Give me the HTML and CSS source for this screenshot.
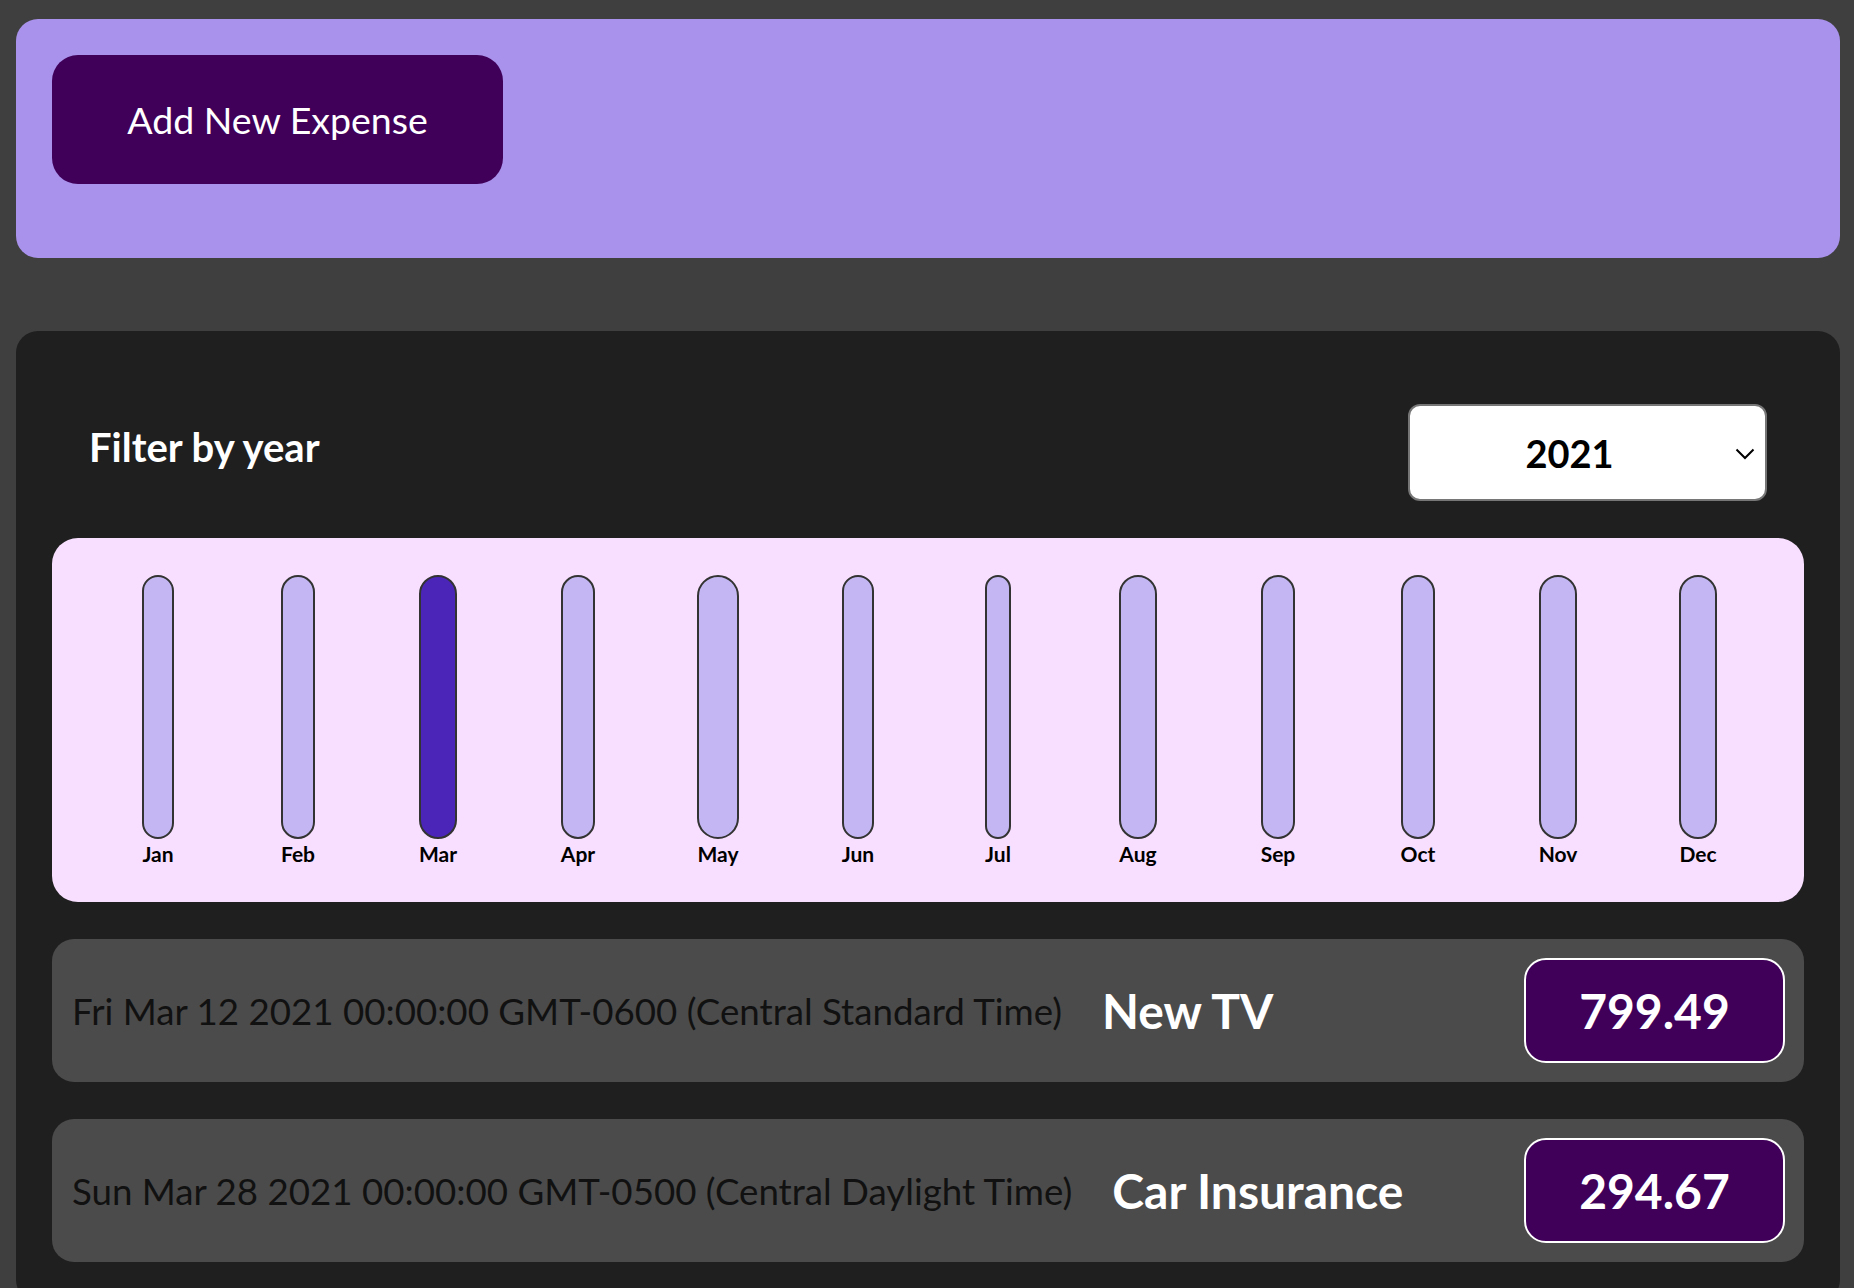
FILE: index.html
```html
<!DOCTYPE html>
<html lang="en">
<head>
<meta charset="utf-8">
<title>Expenses</title>
<link rel="stylesheet" href="styles.css">
</head>
<body>
<div class="page">
  <section class="new-expense">
    <button class="add-btn" type="button">Add New Expense</button>
  </section>

  <section class="expenses">
    <div class="filter">
      <label class="filter-label" for="year">Filter by year</label>
      <div class="select-wrap">
        <select id="year" class="year-select">
          <option>2022</option>
          <option selected>2021</option>
          <option>2020</option>
          <option>2019</option>
        </select>
        <svg class="chevron" width="20" height="12" viewBox="0 0 20 12" aria-hidden="true"><path d="M1.5 1.5 L10 10 L18.5 1.5" fill="none" stroke="#000" stroke-width="2"/></svg>
      </div>
    </div>

    <div class="chart">
      <div class="chart-item"><div class="bar"></div><span class="bar-label">Jan</span></div>
      <div class="chart-item"><div class="bar"></div><span class="bar-label">Feb</span></div>
      <div class="chart-item"><div class="bar active"></div><span class="bar-label">Mar</span></div>
      <div class="chart-item"><div class="bar"></div><span class="bar-label">Apr</span></div>
      <div class="chart-item"><div class="bar"></div><span class="bar-label">May</span></div>
      <div class="chart-item"><div class="bar"></div><span class="bar-label">Jun</span></div>
      <div class="chart-item"><div class="bar"></div><span class="bar-label">Jul</span></div>
      <div class="chart-item"><div class="bar"></div><span class="bar-label">Aug</span></div>
      <div class="chart-item"><div class="bar"></div><span class="bar-label">Sep</span></div>
      <div class="chart-item"><div class="bar"></div><span class="bar-label">Oct</span></div>
      <div class="chart-item"><div class="bar"></div><span class="bar-label">Nov</span></div>
      <div class="chart-item"><div class="bar"></div><span class="bar-label">Dec</span></div>
    </div>

    <ul class="expense-list">
      <li class="expense-item">
        <span class="expense-date">Fri Mar 12 2021 00:00:00 GMT-0600 (Central Standard Time)</span>
        <h2 class="expense-title">New TV</h2>
        <div class="expense-price">799.49</div>
      </li>
      <li class="expense-item">
        <span class="expense-date">Sun Mar 28 2021 00:00:00 GMT-0500 (Central Daylight Time)</span>
        <h2 class="expense-title">Car Insurance</h2>
        <div class="expense-price">294.67</div>
      </li>
    </ul>
  </section>
</div>
</body>
</html>
```

FILE: styles.css
```css
* {
  box-sizing: border-box;
}

html, body {
  margin: 0;
  padding: 0;
  background: #3f3f3f;
  font-family: Lato, "Liberation Sans", sans-serif;
}

.page {
  padding: 19px 14px 0 16px;
}

.new-expense {
  background: #a992eb;
  border-radius: 22px;
  padding: 36px 36px 74px;
  display: flex;
}

.add-btn {
  width: 451px;
  height: 129px;
  border: none;
  border-radius: 26px;
  background: #40005a;
  color: #fff;
  font-family: inherit;
  font-size: 37.5px;
  padding: 0;
  cursor: pointer;
}

.expenses {
  margin-top: 73px;
  background: #1f1f1f;
  border-radius: 22px;
  padding: 0 36px 40px;
}

.filter {
  display: flex;
  align-items: center;
  justify-content: space-between;
  padding: 73px 37px 0;
}

.filter-label {
  color: #fff;
  font-weight: 700;
  font-size: 40px;
  margin-bottom: 12px;
}

.select-wrap {
  position: relative;
  width: 359px;
  height: 97px;
}

.year-select {
  appearance: none;
  -webkit-appearance: none;
  width: 100%;
  height: 100%;
  background: #fff;
  border: 2px solid #767676;
  border-radius: 12px;
  font-family: inherit;
  font-weight: 700;
  font-size: 38px;
  color: #000;
  text-align: center;
  text-align-last: center;
  padding: 0 36px 0 0;
}

.chevron {
  position: absolute;
  right: 12px;
  top: 44px;
  pointer-events: none;
}

.chart {
  margin-top: 37px;
  background: #f8dfff;
  border-radius: 26px;
  padding: 37px 36px 38px;
  display: grid;
  grid-template-columns: repeat(12, 1fr);
  height: 364px;
}

.chart-item {
  justify-self: center;
  width: max-content;
  display: flex;
  flex-direction: column;
  align-items: stretch;
}

.bar {
  height: 264px;
  background: #c4b6f3;
  border: 2px solid #333;
  border-radius: 999px;
}

.bar.active {
  background: #4a25b7;
}

.bar-label {
  font-weight: 700;
  font-size: 21px;
  color: #000;
  line-height: 24px;
  margin-top: 3px;
  text-align: center;
}

.expense-list {
  list-style: none;
  margin: 37px 0 0;
  padding: 0;
  display: flex;
  flex-direction: column;
  gap: 37px;
}

.expense-item {
  background: #4b4b4b;
  border-radius: 22px;
  height: 143px;
  padding: 19px 19px 19px 20px;
  display: flex;
  align-items: center;
  gap: 40px;
}

.expense-date {
  font-size: 36.7px;
  color: #111;
}

.expense-title {
  margin: 0;
  color: #fff;
  font-weight: 700;
  font-size: 48px;
  flex: 1;
}

.expense-price {
  width: 261px;
  height: 105px;
  border: 2px solid #fff;
  border-radius: 22px;
  background: #40005a;
  color: #fff;
  font-weight: 700;
  font-size: 48px;
  display: flex;
  align-items: center;
  justify-content: center;
}
```
